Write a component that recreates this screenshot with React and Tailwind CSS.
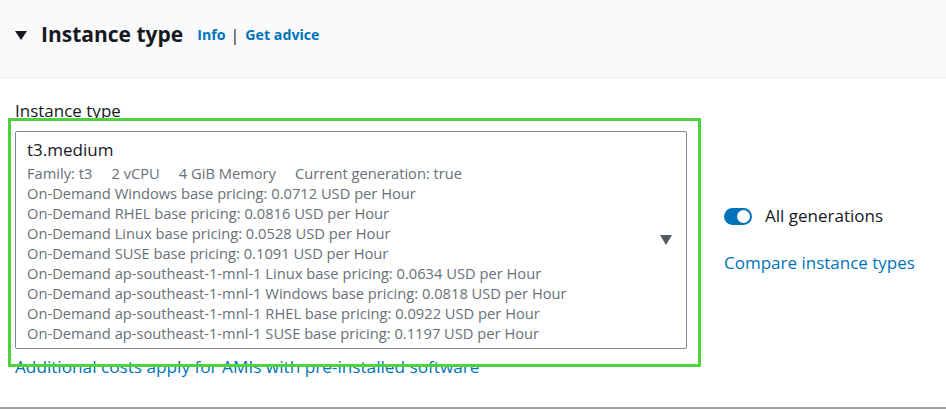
import React from 'react';

const pricing = [
  'On-Demand Windows base pricing: 0.0712 USD per Hour',
  'On-Demand RHEL base pricing: 0.0816 USD per Hour',
  'On-Demand Linux base pricing: 0.0528 USD per Hour',
  'On-Demand SUSE base pricing: 0.1091 USD per Hour',
  'On-Demand ap-southeast-1-mnl-1 Linux base pricing: 0.0634 USD per Hour',
  'On-Demand ap-southeast-1-mnl-1 Windows base pricing: 0.0818 USD per Hour',
  'On-Demand ap-southeast-1-mnl-1 RHEL base pricing: 0.0922 USD per Hour',
  'On-Demand ap-southeast-1-mnl-1 SUSE base pricing: 0.1197 USD per Hour',
];

const App = () => {
  return (
    <div className="relative w-[946px] h-[410px] bg-white font-['Open_Sans',sans-serif] text-[#16191f] overflow-hidden">
      {/* Section header */}
      <div className="h-[78px] bg-[#fafafa] border-b border-[#eaeded] flex items-center pl-[15px] pb-[10px]">
        <svg className="w-[12px] h-[10px] mr-[14px] mt-[2px]" viewBox="0 0 12 10">
          <path d="M0 1 L12 1 L6 10 Z" fill="#16191f" />
        </svg>
        <h2 className="text-[21px] font-bold leading-[28px]">Instance type</h2>
        <div className="ml-[14px] flex items-center text-[14.2px] font-bold text-[#0073bb] pt-[3px]">
          <span>Info</span>
          <span className="ml-[5px] mr-[6px] text-[#16191f] font-normal text-[16px]">|</span>
          <span>Get advice</span>
        </div>
      </div>

      {/* Body */}
      <div className="px-[15px] pt-[22px] flex">
        <div className="w-[672px]">
          <div className="text-[17px] leading-[22px] mb-[9px]">Instance type</div>
          <div className="border border-[#7d8998] rounded-[2px] flex items-center pl-[11px] pr-[14px] pt-[5px] pb-[5px]">
            <div className="flex-1">
              <div className="text-[17px] leading-[26px]">t3.medium</div>
              <div className="text-[14.7px] leading-[20px] text-[#687078]">
                <div className="flex gap-[19px]">
                  <span>Family: t3</span>
                  <span>2 vCPU</span>
                  <span>4 GiB Memory</span>
                  <span>Current generation: true</span>
                </div>
                {pricing.map((p) => (
                  <div key={p}>{p}</div>
                ))}
              </div>
            </div>
            <svg className="w-[12px] h-[10px]" viewBox="0 0 12 10">
              <path d="M0 0 L12 0 L6 10 Z" fill="#545b64" />
            </svg>
          </div>
          <div className="text-[17.2px] leading-[22px] text-[#0073bb] mt-[7px]">
            Additional costs apply for AMIs with pre-installed software
          </div>
        </div>

        <div className="ml-[37px] pt-[105px]">
          <div className="flex items-center">
            <div className="w-[28px] h-[17px] rounded-full bg-[#0073bb] flex items-center justify-end pr-[2px]">
              <div className="w-[13px] h-[13px] rounded-full bg-white" />
            </div>
            <span className="ml-[13px] text-[17px] leading-[22px]">All generations</span>
          </div>
          <div className="mt-[25px] text-[17px] leading-[22px] text-[#0073bb]">Compare instance types</div>
        </div>
      </div>

      {/* bottom divider */}
      <div className="absolute left-0 right-0 bottom-[1px] h-[2px] bg-[#9ba3a8]" />

      {/* highlight annotation */}
      <div className="absolute left-[8px] top-[118px] w-[693px] h-[249px] border-[3px] border-[#4cd43a] pointer-events-none" />
    </div>
  );
};

export default App;
